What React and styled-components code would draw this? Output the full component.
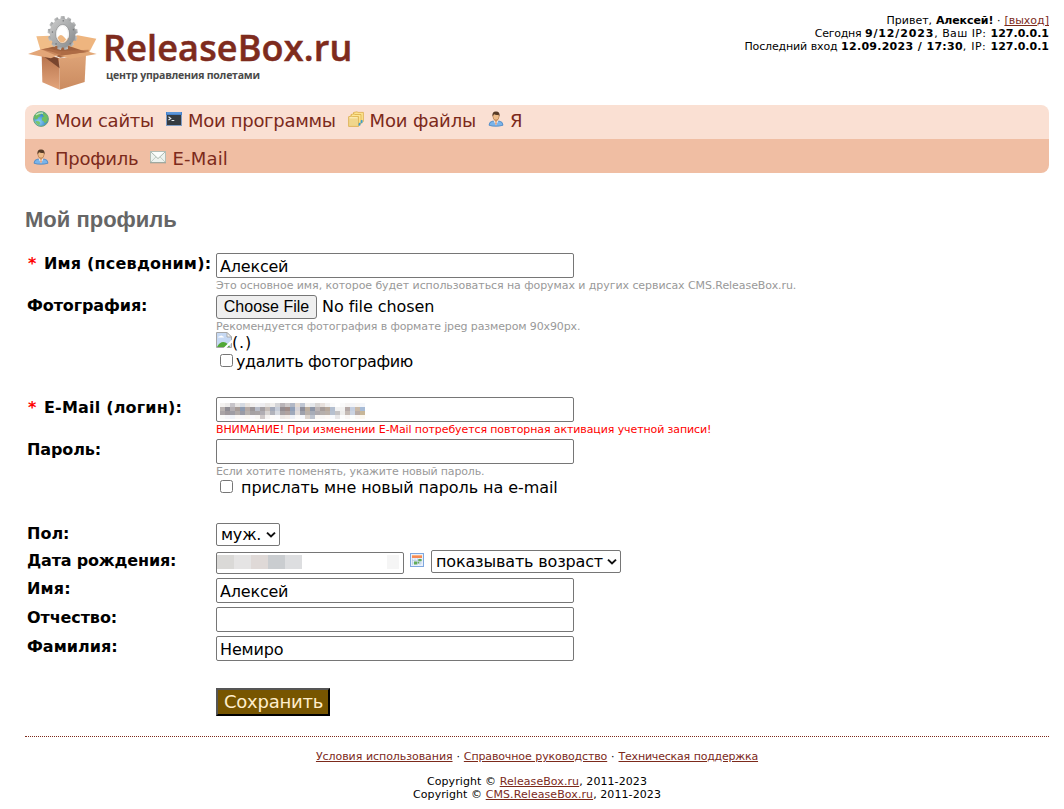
import React from "react";
import styled, { createGlobalStyle } from "styled-components";

const GlobalStyle = createGlobalStyle`
  * { box-sizing: border-box; }
  body {
    margin: 0;
    background: #fff;
    color: #000;
    font: 16px/20px "DejaVu Sans", Verdana, sans-serif;
    overflow: hidden;
  }
  svg { display: block; flex: none; }
`;

const Page = styled.div`
  width: 1024px;
  height: 809px;
  margin-left: 25px;
  overflow: hidden;
`;

/* Run of text; $ls tunes its tracking */
const Text = styled.span`
  letter-spacing: ${(p) => p.$ls || 0}px;
  white-space: pre;
`;
const Bold = styled(Text)`
  font-weight: bold;
`;
const Link = styled.a`
  color: #7c2a1b;
  text-decoration: underline;
  letter-spacing: ${(p) => p.$ls || 0}px;
  white-space: pre;
`;

/* ---------- header ---------- */
const Header = styled.header`
  display: flex;
  justify-content: space-between;
  height: 105px;
`;
const Logo = styled.div`
  display: flex;
  padding: 15px 0 0 3px;
`;
const LogoText = styled.div`
  padding: 12px 0 0 6px;
  white-space: nowrap;
`;
const Brand = styled.div`
  font: 600 36px/42px "Open Sans", sans-serif;
  letter-spacing: 0.15px;
  color: #7e2b1d;
  -webkit-text-stroke: 0.5px #7e2b1d;
`;
const Slogan = styled.div`
  font: 700 10.5px/12px "Open Sans", sans-serif;
  letter-spacing: -0.22px;
  color: #4a4a4a;
  padding-left: 3px;
`;
const Session = styled.div`
  padding-top: 14px;
  font-size: 11px;
  line-height: 13px;
  text-align: right;
  white-space: nowrap;
  word-spacing: 0.3px;
`;

/* ---------- menu ---------- */
const Menu = styled.nav`
  border-radius: 8px;
  overflow: hidden;
`;
const MenuRow = styled.div`
  display: flex;
  gap: 12px;
  height: 34px;
  padding: ${(p) => (p.$sub ? "9px 8px 0" : "5px 8px 0")};
  background: ${(p) => (p.$sub ? "#f0bea3" : "#fae0d3")};
`;
const MenuItem = styled.a`
  display: flex;
  gap: 6px;
  font-size: 18px;
  line-height: 21px;
  color: #7c2a1b;
  svg { margin-top: 1px; }
`;

/* ---------- form ---------- */
const Title = styled.h1`
  margin: 34px 0 0;
  height: 46px;
  font: bold 22px/26px "Liberation Sans", Arial, sans-serif;
  color: #666;
`;
const Form = styled.form`
  padding-left: 2px;
`;
const Row = styled.div`
  display: flex;
  height: ${(p) => p.$h}px;
`;
const Label = styled.div`
  width: 189px;
  padding-top: 1px;
  font-weight: bold;
  letter-spacing: ${(p) => p.$ls || 0}px;
  white-space: pre;
`;
const Required = styled.span`
  margin-left: 1px;
  color: red;
  letter-spacing: 1.8px;
`;
const Field = styled.div`
  display: flex;
  flex-direction: column;
  align-items: flex-start;
`;
const Input = styled.input`
  display: block;
  width: 358px;
  height: 25px;
  padding: 3px 3px 1px;
  border: 1px solid #767676;
  border-radius: 2px;
  background: #fff;
  color: #000;
  font: inherit;
  line-height: 19px;
  letter-spacing: ${(p) => p.$ls || 0}px;
  outline: none;
`;
const MaskedBox = styled.div`
  display: flex;
  justify-content: space-between;
  align-items: flex-start;
  width: ${(p) => p.$w}px;
  height: ${(p) => p.$h}px;
  padding: ${(p) => p.$pad};
  border: 1px solid #767676;
  border-radius: 2px;
`;
const Hint = styled.div`
  font-size: 11px;
  line-height: 13px;
  margin-top: 1px;
  color: ${(p) => (p.$warn ? "#f00" : "#999")};
  letter-spacing: ${(p) => p.$ls}px;
  white-space: nowrap;
`;
const FilePicker = styled.div`
  display: flex;
  gap: 5px;
  height: 24px;
  line-height: 23px;
`;
const FileButton = styled.span`
  width: 101px;
  border: 1px solid #767676;
  border-radius: 3px;
  background: #efefef;
  font: 16px/21px "Liberation Sans", Arial, sans-serif;
  text-align: center;
`;
const Photo = styled.div`
  display: flex;
  height: 20px;
  line-height: 19px;
  svg { margin-top: -1px; }
`;
const Check = styled.label`
  display: flex;
  height: 18px;
  padding-left: 4px;
  gap: ${(p) => p.$gap}px;
  line-height: ${(p) => p.$line || 18}px;
`;
const Tick = styled.input`
  appearance: none;
  width: 13px;
  height: 13px;
  margin: ${(p) => p.$top}px 0 0;
  border: 1px solid #767676;
  border-radius: 2.5px;
  background: #fff;
`;
const Select = styled.div`
  display: flex;
  justify-content: space-between;
  width: ${(p) => p.$w}px;
  height: 23px;
  padding: 0 3px 0 4px;
  border: 1px solid #767676;
  border-radius: 2px;
  line-height: 22px;
  svg { margin-top: 7px; }
`;
const DateLine = styled.div`
  display: flex;
  gap: 6px;
  > svg { margin: 3px 1px 0 0; }
`;
const DateBox = styled(MaskedBox)`
  margin-top: 2px;
`;
const Submit = styled.button`
  display: block;
  width: 114px;
  height: 28px;
  margin: 0 0 0 189px;
  padding: 0 0 0 1px;
  border: 2px solid;
  border-color: #555 #000 #000 #555;
  background: #775500;
  color: #ffeecc;
  font: 18px/24px "DejaVu Sans", Verdana, sans-serif;
  letter-spacing: -0.25px;
`;

/* ---------- footer ---------- */
const Footer = styled.footer`
  margin-top: 20px;
  border-top: 1px dotted #7c2a1b;
  padding-top: 13px;
  font-size: 11px;
  line-height: 13px;
  text-align: center;
  white-space: nowrap;
`;
const FooterLinks = styled.div`
  margin-bottom: 12px;
  word-spacing: 0.4px;
`;

/* ---------- drawings ---------- */
const teeth = Array.from({ length: 13 }, (_, i) => (i * 360) / 13);

const BoxLogo = () => (
  <svg width="69" height="75" viewBox="23 30 207 225">
    <defs>
      <linearGradient id="gearFill" x1="0" y1="0" x2="1" y2="1">
        <stop offset="0" stopColor="#cdcdcd" />
        <stop offset=".5" stopColor="#a9abac" />
        <stop offset="1" stopColor="#85888a" />
      </linearGradient>
      <linearGradient id="boxLeft" x1="0" y1="0" x2="0" y2="1">
        <stop offset="0" stopColor="#b5714a" />
        <stop offset="1" stopColor="#e3a57c" />
      </linearGradient>
      <linearGradient id="boxRight" x1="0" y1="0" x2="0" y2="1">
        <stop offset="0" stopColor="#dda377" />
        <stop offset="1" stopColor="#cb8b60" />
      </linearGradient>
    </defs>
    <path d="M48 94L90 92L135 108L125 130L60 134Z" fill="#f1bd88" />
    <path d="M228 101L172 91L120 104L130 128L206 143Z" fill="#eeb57f" />
    <path d="M60 134L130 118L206 143L120 158Z" fill="#a0623e" />
    <g transform="translate(127 84) scale(.9 1.02)">
      {teeth.map((a) => (
        <path key={a} d="M-8 -38L-6 -50L6 -50L8 -38Z" transform={`rotate(${a})`} fill="url(#gearFill)" />
      ))}
      <path fillRule="evenodd" d="M-43 0A43 43 0 1 1 43 0A43 43 0 1 1 -43 0ZM-22 3A22 28 0 1 0 22 3A22 28 0 1 0 -22 3Z" fill="url(#gearFill)" />
      <ellipse cx="0" cy="3" rx="23" ry="28" fill="none" stroke="#909293" strokeWidth="2.5" />
      <ellipse cx="-1" cy="3" rx="20" ry="25" fill="#fff" stroke="#e6e6e6" strokeWidth="2" />
      <path d="M-17 14Q-10 2 0 8Q8 14 12 19Q0 34 -11 24Z" fill="#efb883" />
      <g fill="#77797b">
        <circle cx="2" cy="-36" r="2.5" /><circle cx="-34" cy="-3" r="2.5" /><circle cx="36" cy="-10" r="2.5" />
        <circle cx="-22" cy="32" r="2.5" /><circle cx="25" cy="31" r="2.5" />
      </g>
    </g>
    <path d="M64 146L118 160L118 254L66 232Z" fill="url(#boxLeft)" />
    <path d="M118 160L197 150L193 231L118 254Z" fill="url(#boxRight)" />
    <path d="M64 150L112 158L118 190Z" fill="#603322" opacity=".75" />
    <path d="M62 133L23 147L92 160L122 147Z" fill="#e3a678" />
    <path d="M62 133L84 130L122 141L122 147L104 150Z" fill="#b9754d" opacity=".65" />
    <path d="M118 152L205 140L229 147L150 161Z" fill="#e2a776" />
    <path d="M84 131L120 138L205 134L205 140L118 152Z" fill="#b37149" opacity=".7" />
  </svg>
);

const Globe = () => (
  <svg width="16" height="16" viewBox="0 0 16 16">
    <defs>
      <radialGradient id="sea" cx=".35" cy=".7">
        <stop offset="0" stopColor="#8ed4f6" />
        <stop offset="1" stopColor="#3f8ccc" />
      </radialGradient>
    </defs>
    <circle cx="8" cy="8" r="7.4" fill="url(#sea)" stroke="#6fa676" strokeWidth="1" />
    <path d="M2 4Q5 .8 9 1.4L8 3.5L6.5 4L7 5.6L5 6.4L4.5 8L2.4 8.4L1.2 7Z" fill="#6cbc5f" />
    <path d="M9 1.5Q13 2 14.8 6L14.6 9.5L12 12.5L10.5 10L9 9.5L9 6.5L11 5.5L9.8 4Z" fill="#6fbe60" />
    <path d="M3 10L6 10.2L7.4 12L6 14.3Q3.5 13 2.4 11Z" fill="#7cc66a" />
    <path d="M3 4Q6 1.4 10 2.2" stroke="#d4f0d0" strokeWidth="1.4" fill="none" opacity=".8" />
  </svg>
);
const Terminal = () => (
  <svg width="16" height="16" viewBox="0 0 16 16">
    <rect x=".5" y="1.5" width="15" height="13" fill="#343a40" stroke="#7f9cc4" />
    <rect x="0" y="1" width="16" height="3" fill="#4581cb" />
    <path d="M1 2h14" stroke="#75aae6" strokeWidth="1" />
    <path d="M2.5 5.8L4.8 7.4L2.5 9" fill="none" stroke="#e8eef2" strokeWidth="1.1" />
    <path d="M5.5 9.5h2.8" stroke="#e8eef2" />
  </svg>
);
const Folders = () => (
  <svg width="16" height="16" viewBox="0 0 16 16">
    <g stroke="#d9a63c" strokeWidth=".7">
      <path d="M5.5 1.5L9 .8L10 1.4H15.4V10.5L13 12H5.5Z" fill="#fbe390" />
      <path d="M3 3.5L6 2.9L7 3.5H13V13H3Z" fill="#fce694" />
      <path d="M.6 5.7L3.5 5L4.5 5.6H10.6V15.4H.6Z" fill="#f0d68c" />
    </g>
    <path d="M11.3 14.6L11.8 11.8M13.4 12L13.8 9.2" fill="none" stroke="#3b9fd0" strokeWidth="1.8" />
    <path d="M1.5 6.8H9.5" stroke="#fff4c0" />
  </svg>
);
const Person = () => (
  <svg width="16" height="16" viewBox="0 0 16 16">
    <path d="M1 14.2Q1 10.6 5 10L8 11L11 10Q15 10.6 15 14.2Q11 15.4 8 15.2Q4 15.4 1 14.2Z" fill="#7ab4ea" stroke="#4a84c0" strokeWidth=".8" />
    <path d="M5.6 9.8L8 14.6L10.4 9.8L8 8.8Z" fill="#f5f8fb" />
    <path d="M8 10.8L7.3 12L8 14.6L8.7 12Z" fill="#df6b2b" />
    <path d="M6.4 7.5H9.6V10L8 11.2L6.4 10Z" fill="#d99b66" />
    <ellipse cx="8" cy="5.3" rx="3.1" ry="3.9" fill="#eebd8b" stroke="#9b6336" strokeWidth=".5" />
    <path d="M4.5 5.5Q3.8 .5 8 .6Q12.2 .5 11.5 5.5L10.6 3.7Q8 4.2 6 3.3Z" fill="#573b27" />
  </svg>
);
const Envelope = () => (
  <svg width="16" height="16" viewBox="0 0 16 16">
    <rect x=".5" y="2.5" width="15" height="11" fill="#eef3ef" stroke="#b4bdb4" />
    <path d="M1 13L6.3 7.5M15 13L9.7 7.5" stroke="#bcc7be" strokeWidth=".9" />
    <path d="M1 3L8 9.6L15 3" fill="#fbfdfb" stroke="#a3b0a6" strokeWidth=".9" />
    <path d="M0 13.8H16" stroke="#8f9890" strokeWidth=".8" />
  </svg>
);
const Calendar = () => (
  <svg width="14" height="14" viewBox="0 0 14 14">
    <rect x=".5" y=".5" width="13" height="13" fill="#e9f1fb" stroke="#7fa7de" />
    <rect x="2" y="2" width="10" height="3" fill="#f58a55" />
    <path d="M2 2.5h10" stroke="#fbb27f" />
    <path d="M2.5 5.5V12M5 5.5V12M7.5 5.5V12M10 5.5V12M2 7.5H12M2 10H12" stroke="#b7cbe4" strokeWidth=".7" />
    <path d="M8.3 6H11.6V8.3H8.3ZM4 8.6H7V11.4H4ZM7.6 8.8H9.2V10.6H7.6Z" fill="#62ab59" />
  </svg>
);
const BrokenImage = () => (
  <svg width="16" height="16" viewBox="0 0 16 16">
    <path d="M.5 .5H11L15.5 5V15.5H.5Z" fill="#c6d9f4" stroke="#a6a6a6" />
    <path d="M2 5.5Q2.5 4 4 4.2Q5.2 2.6 6.6 4.2Q8 4.4 8 5.5Z" fill="#fff" />
    <path d="M1 15Q4.5 8.5 9.5 10.5Q13 12 14 15Z" fill="#51a836" />
    <path d="M11 .5V5H15.5Z" fill="#f4f4f4" stroke="#a6a6a6" strokeWidth=".9" />
    <path d="M7.5 16L16 7.5V10.5L10.5 16Z" fill="#fff" />
  </svg>
);
const Chevron = () => (
  <svg width="10" height="8" viewBox="0 0 10 8">
    <path d="M1 1.6L5 5.4L9 1.6" fill="none" stroke="#111" strokeWidth="2" />
  </svg>
);

const mosaicRows = [
  ["#f4f2f0", "#eceae9", "#c7c4c9", "#e7e5e4", "#d5dae2", "#e8e3df", "#f1efee", "#f2f2f4", "#eeedf0", "#e9e6e4", "#f0eeec", "#d5d5d8", "#b9b4b8", "#cdc9ca", "#b2b8c6", "#e3dad3", "#bfc6d3", "#f1efed", "#e5e8ec", "#d8d5d4", "#e7e0dc", "#f1f0f0", "#fafafa", "#ffffff", "#fafafa", "#f6f4f3", "#f3f4f7", "#f7f5f3", "#f4f6fa"],
  ["#b9b2b0", "#8f8c93", "#b3aeb2", "#a79c98", "#8e9bb0", "#b6aaa5", "#9b9699", "#b8bcc8", "#a4a0a4", "#c6bdb8", "#a3a9b9", "#c7cdd9", "#948d92", "#9f8c88", "#91a0b9", "#d7d4d9", "#8d8f9c", "#bcae9f", "#8e96a8", "#bcb5b5", "#a69d9b", "#b7a89b", "#b3becf", "#f2f2f2", "#f2f1f0", "#b4a8a6", "#c4cee0", "#c9b9a8", "#a7bbd6"],
  ["#aba4a6", "#9f989c", "#9f9da4", "#b1aaa8", "#9a9ba5", "#b7b1ae", "#a5a1a4", "#a8a3a6", "#b0adb3", "#d8d4d2", "#b1b2bb", "#d6d9e0", "#a7a1a3", "#b0a29f", "#9fa9bb", "#dfdad9", "#9ea1ac", "#b9b0a9", "#a7acb8", "#aea9ad", "#b5afac", "#bab0a8", "#b7c1d0", "#c6c4c5", "#eeedec", "#c5bab4", "#cbd3e2", "#b9aca6", "#c8b799"],
  ["#fbfaf9", "#f6f5f8", "#f1f3f8", "#fbf8f6", "#f8f7f8", "#faf7f3", "#faf9fd", "#f9f7f6", "#cfc9c9", "#f6f4f3", "#fdfbfa", "#fcfcfe", "#edE9e7", "#f2ece8", "#eef1f7", "#fbfaf9", "#f6f8fc", "#ddd5ce", "#bfc4cf", "#fbf8f5", "#f8f7f6", "#fcf9f6", "#f9fbfe", "#e9e8e9", "#fdfdfd", "#faf7f5", "#fcfefe", "#fbf7f4", "#fcf8f0"],
];
const EmailMosaic = () => (
  <svg width="145" height="16" viewBox="0 0 145 16" shapeRendering="crispEdges">
    {mosaicRows.map((r, y) => r.map((c, x) => (
      <rect key={`${x}-${y}`} x={x * 5} y={y * 4} width="5" height="4" fill={c} />
    )))}
  </svg>
);
const dateBlocks = ["#dad9d7", "#e5e4e4", "#dfd9d7", "#cacdd0", "#dddee0"];
const DateMosaic = () => (
  <svg width="85" height="14" shapeRendering="crispEdges">
    {dateBlocks.map((c, i) => <rect key={c} x={i * 17} width="17" height="14" fill={c} />)}
  </svg>
);
const ClearBlock = () => (
  <svg width="12" height="14"><rect width="12" height="14" fill="#f5f5f5" /></svg>
);

const mainMenu = [
  [Globe, "Мои сайты", -0.25],
  [Terminal, "Мои программы", -0.3],
  [Folders, "Мои файлы", -0.15],
  [Person, "Я", 0],
];
const subMenu = [
  [Person, "Профиль", -0.25],
  [Envelope, "E-Mail", 0.2],
];
const MenuItems = ({ items }) =>
  items.map(([Icon, text, ls]) => (
    <MenuItem key={text}><Icon /><Text $ls={ls}>{text}</Text></MenuItem>
  ));

export default function App() {
  return (
    <Page>
      <GlobalStyle />
      <Header>
        <Logo>
          <BoxLogo />
          <LogoText>
            <Brand>ReleaseBox.ru</Brand>
            <Slogan>центр управления полетами</Slogan>
          </LogoText>
        </Logo>
        <Session>
          <div><Text>Привет, </Text><Bold $ls={-0.1}>Алексей!</Bold> · <Link>[выход]</Link></div>
          <div><Text $ls={-0.25}>Сегодня </Text><Bold $ls={0.85}>9/12/2023</Bold><Text $ls={0.35}>, Ваш IP: </Text><Bold>127.0.0.1</Bold></div>
          <div><Text $ls={-0.15}>Последний вход </Text><Bold $ls={0.27}>12.09.2023 / 17:30</Bold><Text $ls={0.5}>, IP: </Text><Bold>127.0.0.1</Bold></div>
        </Session>
      </Header>
      <Menu>
        <MenuRow><MenuItems items={mainMenu} /></MenuRow>
        <MenuRow $sub><MenuItems items={subMenu} /></MenuRow>
      </Menu>
      <Title>Мой профиль</Title>
      <Form>
        <Row $h={42}>
          <Label $ls={0.2}><Required>*</Required> Имя (псевдоним):</Label>
          <Field>
            <Input defaultValue="Алексей" $ls={-0.2} />
            <Hint $ls={-0.07}>Это основное имя, которое будет использоваться на форумах и других сервисах CMS.ReleaseBox.ru.</Hint>
          </Field>
        </Row>
        <Row $h={102}>
          <Label $ls={-0.1}>Фотография:</Label>
          <Field>
            <FilePicker><FileButton>Choose File</FileButton><Text $ls={-0.07}>No file chosen</Text></FilePicker>
            <Hint $ls={-0.13}>Рекомендуется фотография в формате jpeg размером 90x90px.</Hint>
            <Photo><BrokenImage /><Text $ls={0.8}>(.)</Text></Photo>
            <Check $gap={3}><Tick $top={1} type="checkbox" /><Text $ls={-0.35}>удалить фотографию</Text></Check>
          </Field>
        </Row>
        <Row $h={42}>
          <Label $ls={0.2}><Required>*</Required> E-Mail (логин):</Label>
          <Field>
            <MaskedBox $w={358} $h={25} $pad="5px 3px"><EmailMosaic /></MaskedBox>
            <Hint $warn $ls={-0.105}>ВНИМАНИЕ! При изменении E-Mail потребуется повторная активация учетной записи!</Hint>
          </Field>
        </Row>
        <Row $h={84}>
          <Label $ls={-0.1}>Пароль:</Label>
          <Field>
            <Input type="password" />
            <Hint $ls={-0.15}>Если хотите поменять, укажите новый пароль.</Hint>
            <Check $gap={8} $line={20}><Tick $top={2} type="checkbox" /><Text $ls={-0.07}>прислать мне новый пароль на e-mail</Text></Check>
          </Field>
        </Row>
        <Row $h={27}>
          <Label>Пол:</Label>
          <Select $w={64}><Text $ls={-0.2}>муж.</Text><Chevron /></Select>
        </Row>
        <Row $h={28}>
          <Label $ls={-0.18}>Дата рождения:</Label>
          <DateLine>
            <DateBox $w={188} $h={22} $pad="2px 4px 0 0"><DateMosaic /><ClearBlock /></DateBox>
            <Calendar />
            <Select $w={190}><Text $ls={-0.15}>показывать возраст</Text><Chevron /></Select>
          </DateLine>
        </Row>
        <Row $h={29}>
          <Label $ls={0.2}>Имя:</Label>
          <Input defaultValue="Алексей" $ls={-0.2} />
        </Row>
        <Row $h={29}>
          <Label $ls={-0.1}>Отчество:</Label>
          <Input />
        </Row>
        <Row $h={52}>
          <Label>Фамилия:</Label>
          <Input defaultValue="Немиро" $ls={-0.15} />
        </Row>
        <Submit type="button">Сохранить</Submit>
      </Form>
      <Footer>
        <FooterLinks>
          <Link $ls={-0.07}>Условия использования</Link> · <Link $ls={-0.13}>Справочное руководство</Link> · <Link $ls={-0.2}>Техническая поддержка</Link>
        </FooterLinks>
        <div><Text $ls={0.08}>Copyright © </Text><Link $ls={0.08}>ReleaseBox.ru</Link><Text $ls={0.08}>, 2011-2023</Text></div>
        <div><Text $ls={0.08}>Copyright © </Text><Link $ls={0.08}>CMS.ReleaseBox.ru</Link><Text $ls={0.08}>, 2011-2023</Text></div>
      </Footer>
    </Page>
  );
}
